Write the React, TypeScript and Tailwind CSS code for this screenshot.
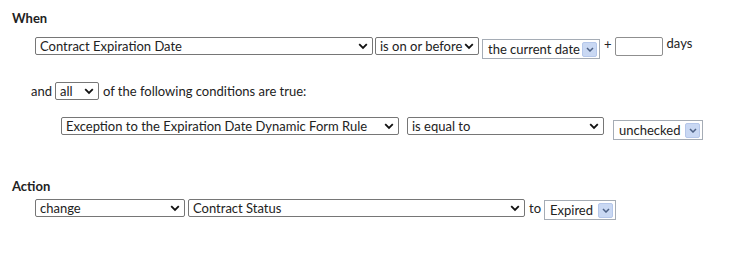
import React from "react";

const Chevron = () => (
  <svg width="10" height="7" viewBox="0 0 10 7" className="shrink-0">
    <path d="M1.2 1.2 L5 5 L8.8 1.2" fill="none" stroke="#111" strokeWidth="1.8" />
  </svg>
);

function Sel({ label, w }: { label: string; w: string }) {
  return (
    <div className={`flex h-[18px] items-center justify-between rounded-[2px] border border-[#767676] bg-white pl-[4px] pr-[4px] text-[13px] leading-none text-[#222] ${w}`}>
      <span className="whitespace-nowrap">{label}</span>
      <Chevron />
    </div>
  );
}

function OldSel({ label, w }: { label: string; w: string }) {
  return (
    <div className={`flex h-[20px] items-center justify-between border border-[#a5acb5] bg-white pl-[5px] pr-[2px] text-[13px] leading-none text-[#222] ${w}`}>
      <span className="whitespace-nowrap">{label}</span>
      <div className="flex h-[15px] w-[15px] items-center justify-center rounded-[2px] border border-[#b5c7ea] bg-[#c9d8f3]">
        <svg width="8" height="5" viewBox="0 0 8 5">
          <path d="M1 1 L4 4 L7 1" fill="none" stroke="#4d6185" strokeWidth="1.5" />
        </svg>
      </div>
    </div>
  );
}

export default function App() {
  return (
    <div className="h-[257px] w-[750px] bg-white pl-[12px] pt-[10px] text-[13px] text-[#222]" style={{ fontFamily: "Lato, 'Open Sans', sans-serif" }}>
      <div className="h-[16px] font-bold leading-[16px]">When</div>
      <div className="ml-[23px] mt-[11px] flex h-[22px] items-start">
        <Sel label="Contract Expiration Date" w="w-[338px]" />
        <div className="ml-[2px]"><Sel label="is on or before" w="w-[104px]" /></div>
        <div className="ml-[3px] mt-[2px]"><OldSel label="the current date" w="w-[118px]" /></div>
        <span className="ml-[4px] mt-[-1px] leading-[16px]">+</span>
        <div className="ml-[3px] h-[19px] w-[48px] rounded-[2px] border border-[#8f8f8f] bg-white" />
        <span className="ml-[4px] mt-[-2px] leading-[16px]">days</span>
      </div>
      <div className="ml-[19px] mt-[23px] flex h-[18px] items-center leading-[18px]">
        <span>and</span>
        <div className="ml-[3px]"><Sel label="all" w="w-[44px]" /></div>
        <span className="ml-[4px]">of the following conditions are true:</span>
      </div>
      <div className="ml-[49px] mt-[17px] flex h-[23px] items-start">
        <Sel label="Exception to the Expiration Date Dynamic Form Rule" w="w-[338px]" />
        <div className="ml-[8px]"><Sel label="is equal to" w="w-[197px]" /></div>
        <div className="ml-[9px] mt-[3px]"><OldSel label="unchecked" w="w-[90px]" /></div>
      </div>
      <div className="mt-[38px] h-[16px] font-bold leading-[16px]">Action</div>
      <div className="ml-[23px] mt-[5px] flex h-[21px] items-start">
        <Sel label="change" w="w-[150px]" />
        <div className="ml-[3px]"><Sel label="Contract Status" w="w-[337px]" /></div>
        <span className="ml-[4px] leading-[18px]">to</span>
        <div className="ml-[3px] mt-[1px]"><OldSel label="Expired" w="w-[72px]" /></div>
      </div>
    </div>
  );
}
